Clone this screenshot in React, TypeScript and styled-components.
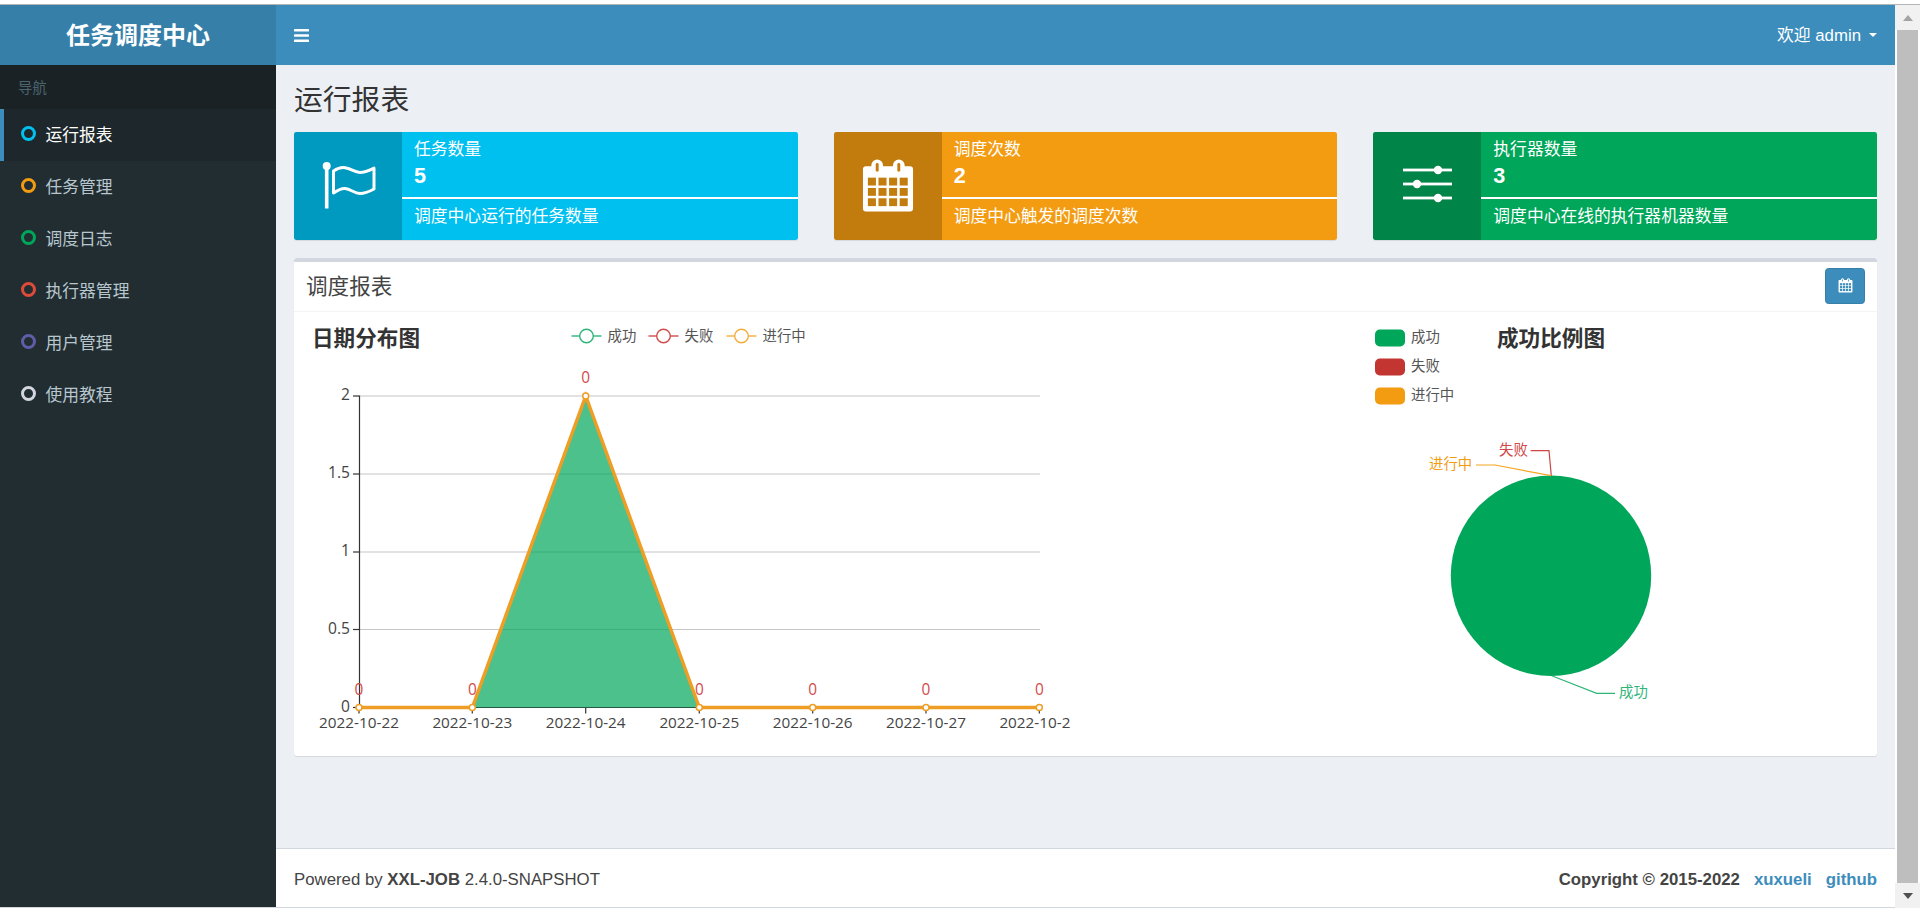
import React from "react";
import styled, { createGlobalStyle } from "styled-components";

const Global = createGlobalStyle`
  html, body { margin: 0; padding: 0; height: 100%; overflow: hidden; background: #fff; }
  body { font-family: "Liberation Sans", "Noto Sans CJK SC", sans-serif; font-size: 16.8px; color: #333; }
  * { box-sizing: border-box; }
`;

const Page = styled.div`
  width: 1920px;
  height: 908px;
  display: flex;
  flex-direction: column;
`;
const TopRule = styled.div`
  height: 5px;
  flex: none;
  border-bottom: 1px solid #b4b4b4;
`;
const Windowed = styled.div`
  flex: 1;
  display: flex;
  min-height: 0;
`;
const Sidebar = styled.aside`
  width: 276px;
  flex: none;
  background: #222d32;
  display: flex;
  flex-direction: column;
`;
const Logo = styled.div`
  height: 60px;
  flex: none;
  background: #367fa9;
  color: #fff;
  font-size: 24px;
  font-weight: 700;
  padding-bottom: 4px;
  display: flex;
  align-items: center;
  justify-content: center;
`;
const NavHeader = styled.div`
  height: 44px;
  flex: none;
  background: #1a2226;
  color: #4b646f;
  font-size: 14.4px;
  padding: 0 0 2px 18px;
  display: flex;
  align-items: center;
`;
const NavRow = styled.div<{ $active?: boolean }>`
  height: 52px;
  flex: none;
  display: flex;
  align-items: center;
  gap: 9.5px;
  padding: 0 0 3px 17px;
  border-left: 4px solid ${(p) => (p.$active ? "#3c8dbc" : "transparent")};
  background: ${(p) => (p.$active ? "#1e282c" : "transparent")};
  color: ${(p) => (p.$active ? "#fff" : "#b8c7ce")};
  font-size: 16.8px;
`;
const NavDot = styled.span<{ $color: string }>`
  width: 15px;
  height: 15px;
  border-radius: 50%;
  border: 3px solid ${(p) => p.$color};
  flex: none;
`;
const Main = styled.div`
  flex: 1;
  min-width: 0;
  display: flex;
  flex-direction: column;
  background: #ecf0f5;
`;
const TopBar = styled.header`
  height: 60px;
  flex: none;
  background: #3c8dbc;
  color: #fff;
  padding: 0 18px;
  display: flex;
  align-items: center;
  justify-content: space-between;
`;
const UserMenu = styled.div`
  display: flex;
  align-items: center;
  gap: 8px;
  font-size: 16.8px;
  padding-bottom: 3px;
`;
const Caret = styled.span`
  width: 0;
  height: 0;
  border-left: 4.8px solid transparent;
  border-right: 4.8px solid transparent;
  border-top: 4.8px solid #fff;
  margin-top: 3px;
`;
const Content = styled.main`
  flex: 1;
  min-height: 0;
  padding: 0 18px;
`;
const PageTitle = styled.h1`
  margin: 0;
  height: 67px;
  padding-top: 18px;
  font-size: 28.8px;
  line-height: 34px;
  font-weight: 400;
  color: #333;
`;
const StatGrid = styled.div`
  display: grid;
  grid-template-columns: repeat(3, 1fr);
  gap: 36px;
  margin-bottom: 18px;
`;
const StatBox = styled.div<{ $color: string }>`
  height: 108px;
  display: flex;
  border-radius: 2.4px;
  overflow: hidden;
  background: ${(p) => p.$color};
  color: #fff;
  box-shadow: 0 1px 1px rgba(0, 0, 0, 0.1);
`;
const StatIcon = styled.div`
  width: 108px;
  flex: none;
  background: rgba(0, 0, 0, 0.2);
  display: flex;
  align-items: center;
  justify-content: center;
`;
const StatBody = styled.div`
  flex: 1;
  min-width: 0;
  padding-top: 6px;
`;
const StatLabel = styled.div`
  padding-left: 12px;
  line-height: 23px;
  font-size: 16.8px;
`;
const StatNumber = styled.div`
  padding: 1px 0 0 12px;
  line-height: 28px;
  font-size: 21.6px;
  font-weight: 700;
`;
const StatBar = styled.div`
  height: 2px;
  background: #fff;
  margin: 7px 0 6px;
`;
const Card = styled.section`
  background: #fff;
  border-top: 4px solid #d2d6de;
  border-radius: 3.6px;
  box-shadow: 0 1px 1px rgba(0, 0, 0, 0.1);
`;
const CardHeader = styled.div`
  height: 50px;
  border-bottom: 1px solid #f4f4f4;
  padding: 0 12px;
  display: flex;
  align-items: center;
  justify-content: space-between;
`;
const CardTitle = styled.h3`
  margin: 0 0 4px;
  font-size: 21.6px;
  font-weight: 400;
  color: #444;
`;
const IconButton = styled.button`
  width: 40px;
  height: 36px;
  padding: 0;
  margin-bottom: 2px;
  border: 1px solid #367fa9;
  border-radius: 3.6px;
  background: #3c8dbc;
  display: flex;
  align-items: center;
  justify-content: center;
`;
const ChartRow = styled.div`
  height: 444px;
  display: grid;
  grid-template-columns: 2fr 1fr;
`;
const ChartSvg = styled.svg`
  display: block;
  overflow: hidden;
`;
const ChartText = styled.text<{ $color?: string; $size?: number; $bold?: boolean }>`
  font-family: "Open Sans", "Noto Sans CJK SC", sans-serif;
  font-size: ${(p) => p.$size ?? 14.4}px;
  font-weight: ${(p) => (p.$bold ? 700 : 400)};
  fill: ${(p) => p.$color ?? "#444"};
  dominant-baseline: central;
`;
const Footer = styled.footer`
  height: 59px;
  flex: none;
  background: #fff;
  border-top: 1px solid #d2d6de;
  padding: 3px 18px 0;
  display: flex;
  align-items: center;
  justify-content: space-between;
  color: #444;
  font-size: 16.8px;
`;
const FooterRight = styled.div`
  display: flex;
  gap: 14px;
  font-weight: 700;
`;
const FooterLink = styled.a`
  color: #3c8dbc;
  text-decoration: none;
`;
const BottomRule = styled.div`
  height: 1px;
  flex: none;
  background: #d2d6de;
`;
const MainColumn = styled.div`
  flex: 1;
  min-width: 0;
  display: flex;
  flex-direction: column;
`;
const ScrollTrack = styled.div`
  width: 25px;
  flex: none;
  padding: 0 2px 0 2px;
  display: flex;
  flex-direction: column;
  background: #fff;
`;
const ScrollCap = styled.div`
  flex: none;
  height: 25px;
  background: #f1f1f1;
  margin: 0 -2px;
  display: flex;
  align-items: center;
  justify-content: center;
`;
const ScrollThumb = styled.div`
  flex: 1;
  background: #bebebe;
`;
const Arrow = styled.span<{ $up?: boolean }>`
  width: 0;
  height: 0;
  border-left: 5.5px solid transparent;
  border-right: 5.5px solid transparent;
  ${(p) => (p.$up ? "border-bottom: 6px solid #a3a3a3;" : "border-top: 6px solid #505050;")}
`;

const nav = [
  ["运行报表", "#00c0ef"],
  ["任务管理", "#f39c12"],
  ["调度日志", "#00a65a"],
  ["执行器管理", "#dd4b39"],
  ["用户管理", "#605ca8"],
  ["使用教程", "#d2d6de"],
];

const FlagIcon = () => (
  <svg width="70" height="65" viewBox="-2 -1.5 70 65" aria-hidden>
    <circle cx="11.7" cy="10.5" r="4" fill="#fff" />
    <rect x="9.9" y="11" width="3.6" height="42" fill="#fff" />
    <path
      d="M18.5 15.5C23 12.5 26.5 11.7 30 12.2C36 13 39.500 17 45 17C50 17 54 15 59 12.600V33.500C54 36.200 50 38 45 38C39 38 36 33.500 30 33C26 32.700 22.500 34.800 18.500 37.500Z"
      fill="none"
      stroke="#fff"
      strokeWidth="3"
      strokeLinejoin="round"
    />
  </svg>
);

const CalendarIcon = ({ size, cell }: { size: number; cell: string }) => {
  const xs = [15.5, 26.3, 37.1, 47.9];
  const ys = [26, 36.5, 47];
  return (
    <svg width={size} height={size} viewBox="9.500 7 53 55" aria-hidden>
      <path
        d="M10.500 17.500a3 3 0 0 1 3-3h5.500v-1a6 6 0 0 1 12 0v1h10v-1a6 6 0 0 1 12 0v1h5.500a3 3 0 0 1 3 3v40a3 3 0 0 1-3 3h-45a3 3 0 0 1-3-3z"
        fill="#fff"
      />
      <rect x="23.500" y="11" width="3" height="9" rx="1.5" fill={cell} />
      <rect x="45.500" y="11" width="3" height="9" rx="1.5" fill={cell} />
      {xs.flatMap((x) =>
        ys.map((y) => <rect key={`${x}-${y}`} x={x} y={y} width="8.200" height="8" fill={cell} />)
      )}
    </svg>
  );
};

const SlidersIcon = () => (
  <svg width="108" height="108" viewBox="0 0 108 108" aria-hidden>
    {[
      [38, 65],
      [52, 44],
      [66, 65],
    ].map(([y, x]) => (
      <g key={y}>
        <rect x="30" y={y - 1.4} width="49" height="2.800" fill="#fff" />
        <circle cx={x} cy={y} r="4.200" fill="#fff" />
      </g>
    ))}
  </svg>
);

const BarsIcon = () => (
  <svg width="15" height="13" viewBox="0 0 15 13" aria-hidden>
    <rect y="0" width="15" height="2.600" rx="0.600" fill="#fff" />
    <rect y="5.200" width="15" height="2.600" rx="0.600" fill="#fff" />
    <rect y="10.400" width="15" height="2.600" rx="0.600" fill="#fff" />
  </svg>
);

const xPts = [359, 472.3, 585.7, 699.3, 812.7, 926, 1039.3];
const dates = ["2022-10-22", "2022-10-23", "2022-10-24", "2022-10-25", "2022-10-26", "2022-10-27", "2022-10-28"];
const yTicks: [string, number][] = [
  ["2", 396],
  ["1.5", 474],
  ["1", 552],
  ["0.5", 629.500],
  ["0", 707.500],
];
const lineLegend: [string, string, number][] = [
  ["成功", "#2fb57a", 571.500],
  ["失败", "#cf4d4d", 648.500],
  ["进行中", "#f6ad3c", 726.500],
];
const orange = "#ee9d25";

const LineChart = () => (
  <ChartSvg width="776" height="444" viewBox="294 312 776 444" role="img">
    <ChartText x="312" y="337" $size={21.6} $bold $color="#333">
      日期分布图
    </ChartText>
    {lineLegend.map(([name, color, x]) => (
      <g key={name}>
        <line x1={x} x2={x + 30} y1="336" y2="336" stroke={color} strokeWidth="1.400" />
        <circle cx={x + 15} cy="336" r="6.800" fill="#fff" stroke={color} strokeWidth="1.400" />
        <ChartText x={x + 36} y="335" $color="#555">
          {name}
        </ChartText>
      </g>
    ))}
    {yTicks.slice(0, 4).map(([, y]) => (
      <line key={y} x1="359" x2="1040" y1={y} y2={y} stroke="#c6c6c6" strokeWidth="1.200" />
    ))}
    {yTicks.map(([label, y]) => (
      <g key={label}>
        <line x1="353" x2="359" y1={y} y2={y} stroke="#333" strokeWidth="1.200" />
        <ChartText x="350" y={y - 2} textAnchor="end" $size={15.6} $color="#444">
          {label}
        </ChartText>
      </g>
    ))}
    <line x1="359.500" x2="359.500" y1="395.500" y2="708" stroke="#333" strokeWidth="1.200" />
    <line x1="359" x2="1040" y1="707.500" y2="707.500" stroke="#333" strokeWidth="1.200" />
    {xPts.map((x, i) => (
      <g key={x}>
        <line x1={x} x2={x} y1="707.500" y2="713.500" stroke="#333" strokeWidth="1.200" />
        <ChartText x={x} y="721.500" textAnchor="middle" $size={15.3} $color="#444">
          {dates[i]}
        </ChartText>
      </g>
    ))}
    <polygon points="472.300,707.500 585.700,396 699.300,707.500" fill="#00a65a" fillOpacity="0.7" />
    <polyline
      points={xPts.map((x, i) => `${x},${i === 2 ? 396 : 707.5}`).join(" ")}
      fill="none"
      stroke={orange}
      strokeWidth="3.400"
    />
    {xPts.map((x, i) => (
      <g key={x}>
        <circle cx={x} cy={i === 2 ? 396 : 707.5} r="3" fill="#fff" stroke={orange} strokeWidth="1.500" />
        <ChartText x={x} y={i === 2 ? 377 : 689} textAnchor="middle" $size={15.4} $color="#d14a4a">
          0
        </ChartText>
      </g>
    ))}
  </ChartSvg>
);

const pieLegend: [string, string, number][] = [
  ["成功", "#00a65a", 338],
  ["失败", "#c23531", 367],
  ["进行中", "#f39c12", 396],
];

const PieChart = () => (
  <ChartSvg width="528" height="444" viewBox="1349 312 528 444" role="img">
    {pieLegend.map(([name, color, y]) => (
      <g key={name}>
        <rect x="1375" y={y - 8.5} width="30" height="17" rx="4.800" fill={color} />
        <ChartText x="1411" y={y - 2} $color="#555">
          {name}
        </ChartText>
      </g>
    ))}
    <ChartText x="1497" y="337" $size={21.6} $bold $color="#333">
      成功比例图
    </ChartText>
    <circle cx="1551" cy="575.700" r="100.200" fill="#00a65a" />
    <polyline points="1551.300,475.700 1549,450.700 1530.700,450.700" fill="none" stroke="#cf4545" strokeWidth="1.200" />
    <polyline points="1551,475.700 1495,465 1476,465" fill="none" stroke="#f6a623" strokeWidth="1.200" />
    <polyline points="1551.700,675.700 1596.700,693.300 1615,693.300" fill="none" stroke="#2fb57a" strokeWidth="1.200" />
    <ChartText x="1499" y="449" $color="#d14a4a">
      失败
    </ChartText>
    <ChartText x="1429" y="463.500" $color="#f39c12">
      进行中
    </ChartText>
    <ChartText x="1619" y="691.500" $color="#2fb57a">
      成功
    </ChartText>
  </ChartSvg>
);

const Columns = styled.div`
  flex: 1;
  min-height: 0;
  display: flex;
`;
const ContentColumn = styled.div`
  flex: 1;
  min-width: 0;
  display: flex;
  flex-direction: column;
`;

function PageRow() {
  return (
    <Columns>
      <Sidebar>
        <Logo>任务调度中心</Logo>
        <NavHeader>导航</NavHeader>
        {nav.map(([label, color], i) => (
          <NavRow key={label} $active={i === 0}>
            <NavDot $color={color} />
            {label}
          </NavRow>
        ))}
      </Sidebar>
      <ContentColumn>
        <TopBar>
          <BarsIcon />
          <UserMenu>
            欢迎 admin
            <Caret />
          </UserMenu>
        </TopBar>
        <Content>
          <PageTitle>运行报表</PageTitle>
          <StatGrid>
            <StatBox $color="#00c0ef">
              <StatIcon>
                <FlagIcon />
              </StatIcon>
              <StatBody>
                <StatLabel>任务数量</StatLabel>
                <StatNumber>5</StatNumber>
                <StatBar />
                <StatLabel>调度中心运行的任务数量</StatLabel>
              </StatBody>
            </StatBox>
            <StatBox $color="#f39c12">
              <StatIcon>
                <CalendarIcon size={54} cell="#c27d0e" />
              </StatIcon>
              <StatBody>
                <StatLabel>调度次数</StatLabel>
                <StatNumber>2</StatNumber>
                <StatBar />
                <StatLabel>调度中心触发的调度次数</StatLabel>
              </StatBody>
            </StatBox>
            <StatBox $color="#00a65a">
              <StatIcon>
                <SlidersIcon />
              </StatIcon>
              <StatBody>
                <StatLabel>执行器数量</StatLabel>
                <StatNumber>3</StatNumber>
                <StatBar />
                <StatLabel>调度中心在线的执行器机器数量</StatLabel>
              </StatBody>
            </StatBox>
          </StatGrid>
          <Card>
            <CardHeader>
              <CardTitle>调度报表</CardTitle>
              <IconButton aria-label="日期">
                <CalendarIcon size={15} cell="#3c8dbc" />
              </IconButton>
            </CardHeader>
            <ChartRow>
              <LineChart />
              <PieChart />
            </ChartRow>
          </Card>
        </Content>
        <Footer>
          <div>
            Powered by <b>XXL-JOB</b> 2.4.0-SNAPSHOT
          </div>
          <FooterRight>
            <span>Copyright © 2015-2022</span>
            <FooterLink href="#">xuxueli</FooterLink>
            <FooterLink href="#">github</FooterLink>
          </FooterRight>
        </Footer>
      </ContentColumn>
    </Columns>
  );
}

export default function App() {
  return (
    <Page>
      <Global />
      <TopRule />
      <Windowed>
        <MainColumn>
          <Main>
            <PageRow />
          </Main>
          <BottomRule />
        </MainColumn>
        <ScrollTrack>
          <ScrollCap>
            <Arrow $up />
          </ScrollCap>
          <ScrollThumb />
          <ScrollCap>
            <Arrow />
          </ScrollCap>
        </ScrollTrack>
      </Windowed>
    </Page>
  );
}
